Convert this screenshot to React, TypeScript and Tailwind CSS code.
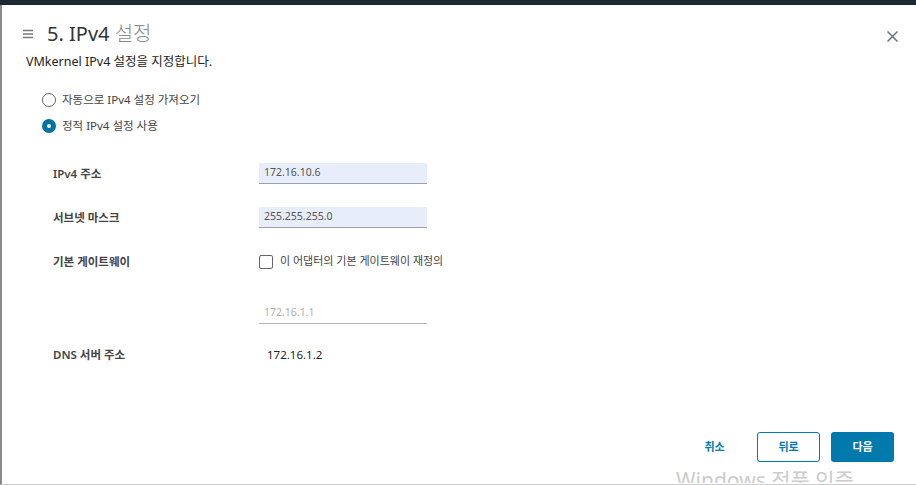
export default function App() {
  const labelCls = "w-[206px] shrink-0 text-[11.5px] font-semibold text-[#444]";
  return (
    <div className="relative w-[916px] h-[485px] overflow-hidden bg-white text-[#333] font-['Noto_Sans','Noto_Sans_CJK_KR',sans-serif]">
      <div className="h-[5px] bg-[#1c2834]" />
      <div className="h-[480px] flex flex-col border-l-2 border-l-[#8a8a8a] border-b border-b-[#cdcdcd]">
        {/* header */}
        <div className="flex items-center h-[24px] mt-[17px] pl-[20px] pr-[18px]">
          <svg width="12" height="10" viewBox="0 0 12 10" className="shrink-0">
            <path d="M1 1.5h10M1 5h10M1 8.5h10" stroke="#7a7a7a" strokeWidth="1.4" />
          </svg>
          <h1 className="ml-[13px] text-[20px] leading-[24px] font-normal text-[#333]">
            5. IPv4 <span className="font-light text-[#8a8a8a]">설정</span>
          </h1>
          <button className="ml-auto mt-[4px]">
            <svg width="11" height="11" viewBox="0 0 11 11">
              <path d="M0.5 0.5l10 10M10.5 0.5l-10 10" stroke="#66727d" strokeWidth="1.5" />
            </svg>
          </button>
        </div>

        <p className="mt-[7px] pl-[24px] text-[12.5px] leading-[18px] text-[#222]">
          VMkernel IPv4 설정을 지정합니다.
        </p>

        {/* radios */}
        <div className="mt-[16px] pl-[40px] flex flex-col">
          <label className="flex items-center h-[26px] gap-[6px] text-[11.5px] text-[#444]">
            <span className="w-[14px] h-[14px] rounded-full border border-[#666] bg-white" />
            자동으로 IPv4 설정 가져오기
          </label>
          <label className="flex items-center h-[26px] gap-[6px] text-[11.5px] text-[#444]">
            <span className="w-[14px] h-[14px] rounded-full bg-[#0072a3] flex items-center justify-center">
              <span className="w-[4px] h-[4px] rounded-full bg-white" />
            </span>
            정적 IPv4 설정 사용
          </label>
        </div>

        {/* form */}
        <div className="pl-[51px] flex flex-col">
          <div className="mt-[24px] h-[21px] flex items-center">
            <div className={labelCls}>IPv4 주소</div>
            <div className="w-[168px] h-[21px] bg-[#e8eef9] border-b border-[#9aa0a6] flex items-center pl-[5px] text-[10.5px] text-[#555]">
              172.16.10.6
            </div>
          </div>
          <div className="mt-[23px] h-[21px] flex items-center">
            <div className={labelCls}>서브넷 마스크</div>
            <div className="w-[168px] h-[21px] bg-[#e8eef9] border-b border-[#9aa0a6] flex items-center pl-[5px] text-[10.5px] text-[#555]">
              255.255.255.0
            </div>
          </div>
          <div className="mt-[23px] h-[21px] flex items-center">
            <div className={labelCls}>기본 게이트웨이</div>
            <label className="flex items-center gap-[7px] text-[11px] text-[#444]">
              <span className="w-[14px] h-[14px] rounded-[2px] border border-[#666] bg-white" />
              이 어댑터의 기본 게이트웨이 재정의
            </label>
          </div>
          <div className="mt-[31px] h-[21px] flex items-center">
            <div className={labelCls} />
            <div className="w-[168px] h-[21px] border-b border-[#b5b5b5] flex items-center pl-[5px] text-[10.5px] text-[#b0b0b0]">
              172.16.1.1
            </div>
          </div>
          <div className="mt-[20px] h-[21px] flex items-center">
            <div className={labelCls}>DNS 서버 주소</div>
            <div className="pl-[8px] text-[11.5px] text-[#222]">172.16.1.2</div>
          </div>
        </div>

        {/* footer */}
        <div className="mt-auto mb-[22px] pr-[22px] flex justify-end gap-[11px]">
          <button className="w-[63px] h-[30px] rounded-[3px] text-[11px] font-bold text-[#0079b8]">
            취소
          </button>
          <button className="w-[63px] h-[30px] rounded-[3px] border border-[#0079b8] text-[11px] font-bold text-[#0079b8] bg-white">
            뒤로
          </button>
          <button className="w-[63px] h-[30px] rounded-[3px] bg-[#0079ad] text-[11px] font-bold text-white">
            다음
          </button>
        </div>
      </div>

      <div className="absolute left-[676px] top-[467px] h-[16px] overflow-hidden pointer-events-none">
        <div className="text-[21px] leading-[26px] text-[#cccccc] whitespace-nowrap">
          Windows 정품 인증
        </div>
      </div>
    </div>
  );
}
